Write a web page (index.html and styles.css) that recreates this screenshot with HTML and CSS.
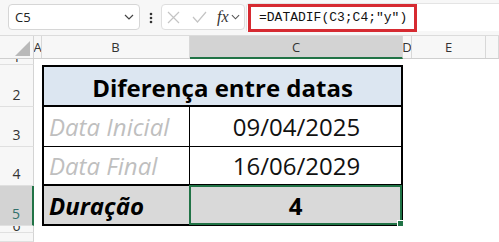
FILE: index.html
```html
<!DOCTYPE html>
<html lang="pt">
<head>
    <meta charset="UTF-8">
    <title>DATADIF</title>
    <link rel="stylesheet" href="styles.css">
</head>
<body>
    <header class="formula-bar">
        <div class="name-box">
            <span>C5</span>
            <svg class="chev" width="10" height="6" viewBox="0 0 10 6"><path d="M1 1l4 4 4-4" fill="none" stroke="#444" stroke-width="1.2"/></svg>
        </div>
        <svg class="dots" width="4" height="12" viewBox="0 0 4 12"><circle cx="2" cy="2" r="1.3" fill="#333"/><circle cx="2" cy="6" r="1.3" fill="#333"/><circle cx="2" cy="10" r="1.3" fill="#333"/></svg>
        <div class="fx-box">
            <svg width="13" height="13" viewBox="0 0 13 13"><path d="M1 1l11 11M12 1L1 12" stroke="#c4c4c4" stroke-width="1.2"/></svg>
            <svg width="15" height="12" viewBox="0 0 15 12"><path d="M1 6l4.5 5L14 1" fill="none" stroke="#c4c4c4" stroke-width="1.2"/></svg>
            <span class="fx">fx</span>
            <svg class="chev" width="9" height="6" viewBox="0 0 10 6"><path d="M1 1l4 4 4-4" fill="none" stroke="#555" stroke-width="1.2"/></svg>
        </div>
        <div class="formula">
            <span class="formula-text">=DATADIF(C3;C4;"y")</span>
        </div>
    </header>

    <main class="sheet">
        <div class="row head">
            <div class="corner"><span class="tri"></span></div>
            <div class="col-h">A</div>
            <div class="col-h">B</div>
            <div class="col-h sel">C</div>
            <div class="col-h">D</div>
            <div class="col-h">E</div>
            <div class="col-h"></div>
        </div>
        <div class="row r1">
            <div class="rh">1</div>
        </div>
        <div class="row r2">
            <div class="rh">2</div>
            <div></div>
            <div class="cell title">Diferença entre datas</div>
        </div>
        <div class="row r3">
            <div class="rh">3</div>
            <div></div>
            <div class="cell label">Data Inicial</div>
            <div class="cell value">09/04/2025</div>
        </div>
        <div class="row r4">
            <div class="rh">4</div>
            <div></div>
            <div class="cell label">Data Final</div>
            <div class="cell value">16/06/2029</div>
        </div>
        <div class="row r5">
            <div class="rh sel">5</div>
            <div></div>
            <div class="cell total-label">Duração</div>
            <div class="cell total-value">4</div>
        </div>
        <div class="row r6">
            <div class="rh">6</div>
        </div>
        <div class="row r7">
            <div class="rh">7</div>
        </div>
    </main>
</body>
</html>
```

FILE: styles.css
```css
body {
    margin: 0;
    width: 499px;
    height: 242px;
    overflow: hidden;
    background: #fff;
    font-family: "Open Sans", "Noto Sans", sans-serif;
}

/* formula bar */
.formula-bar {
    display: flex;
    align-items: flex-start;
    height: 36px;
    padding: 3px 0 0 8px;
    box-sizing: border-box;
    background: #f7f7f7;
    border-bottom: 1px solid #dcdcdc;
}
.name-box {
    display: flex;
    align-items: center;
    justify-content: space-between;
    width: 132px;
    height: 26px;
    padding: 0 5px 0 6px;
    box-sizing: border-box;
    margin-top: 1px;
    background: #fff;
    border: 1px solid #d6d6d6;
    border-radius: 4px;
    font-size: 13px;
    color: #222;
}
.dots {
    margin: 9px 8px 0 9px;
}
.fx-box {
    display: flex;
    align-items: center;
    gap: 12px;
    width: 84px;
    height: 26px;
    margin-top: 1px;
    padding: 0 3px 0 5px;
    box-sizing: border-box;
    background: #fff;
    border: 1px solid #dedede;
    border-radius: 4px;
}
.fx-box .fx {
    font-family: "Liberation Serif", serif;
    font-style: italic;
    font-size: 16px;
    color: #333;
    margin-left: -2px;
}
.fx-box .chev {
    margin-left: -10px;
}
.formula {
    flex: 1;
    height: 28px;
    margin-left: 1px;
    background: #fff;
    border-top: 1px solid #e4e4e4;
    border-left: 1px solid #e4e4e4;
    border-radius: 4px 0 0 0;
    box-sizing: border-box;
}
.formula-text {
    display: inline-block;
    height: 28px;
    margin-left: 1px;
    margin-top: -1px;
    padding: 0 7px 0 8px;
    box-sizing: border-box;
    border: 3px solid #d62a31;
    font-family: "Liberation Mono", monospace;
    font-size: 13px;
    line-height: 22px;
    color: #111;
}

/* sheet grid */
.row {
    display: grid;
    grid-template-columns: 34px 8px 148px 213px 9px 74px 1fr;
}
.head {
    height: 23px;
    background: #f7f7f7;
    border-bottom: 1px solid #cfcfcf;
    box-sizing: border-box;
}
.corner {
    position: relative;
    border-right: 1px solid #d4d4d4;
}
.tri {
    position: absolute;
    right: 3px;
    bottom: 2px;
    width: 0;
    height: 0;
    border-left: 15px solid transparent;
    border-bottom: 15px solid #b9b9b9;
}
.col-h {
    display: flex;
    align-items: center;
    justify-content: center;
    font-size: 13px;
    color: #333;
    border-right: 1px solid #d8d8d8;
    overflow: hidden;
}
.col-h.sel {
    background: #d3d3d3;
    border-bottom: 2px solid #217346;
    margin-bottom: -1px;
}

.rh {
    display: flex;
    align-items: flex-end;
    justify-content: center;
    padding-bottom: 2px;
    box-sizing: border-box;
    overflow: hidden;
    background: #f7f7f7;
    border-right: 1px solid #d4d4d4;
    border-bottom: 1px solid #e0e0e0;
    font-size: 14px;
    line-height: 18px;
    color: #333;
}
.rh.sel {
    background: #d3d3d3;
    color: #32706b;
    border-right: 2px solid #217346;
}
.r1 { height: 6px; }
.r1 .rh { padding-bottom: 0; line-height: 14px; }
.r2 { height: 42px; }
.r3 { height: 40px; }
.r4 { height: 39px; }
.r5 { height: 40px; }
.r6 { height: 7px; }
.r6 .rh { padding-bottom: 0; line-height: 12px; }
.r7 { height: 9px; }
.r7 .rh { align-items: flex-start; padding: 6px 0 0; line-height: 18px; }

/* table cells */
.cell {
    display: flex;
    align-items: center;
    box-sizing: border-box;
    border-color: #000;
    border-style: solid;
    border-width: 0;
    font-size: 24px;
    white-space: nowrap;
    overflow: hidden;
}
.title {
    grid-column: 3 / 5;
    justify-content: center;
    padding-top: 2px;
    border-width: 2px;
    background: #dce6f1;
    font-weight: 700;
    color: #000;
}
.label {
    padding-left: 5px;
    border-width: 0 1px 1px 2px;
    font-style: italic;
    color: #bfbfbf;
}
.value {
    justify-content: center;
    padding-left: 2px;
    border-width: 0 2px 1px 0;
    color: #111;
}
.r4 .cell {
    border-bottom-width: 2px;
}
.total-label {
    padding-left: 5px;
    border-width: 0 1px 2px 2px;
    background: #d9d9d9;
    font-weight: 700;
    font-style: italic;
    color: #000;
}
.total-value {
    position: relative;
    justify-content: center;
    border-width: 0 2px 2px 0;
    background: #d9d9d9;
    font-weight: 700;
    overflow: visible;
}
.total-value::after {
    content: "";
    position: absolute;
    left: -1px;
    top: -1px;
    right: -1px;
    bottom: -1px;
    border: 2px solid #217346;
}
.total-value::before {
    content: "";
    position: absolute;
    right: -3px;
    bottom: -3px;
    width: 5px;
    height: 5px;
    background: #217346;
    border: 1px solid #fff;
    z-index: 1;
}
```
